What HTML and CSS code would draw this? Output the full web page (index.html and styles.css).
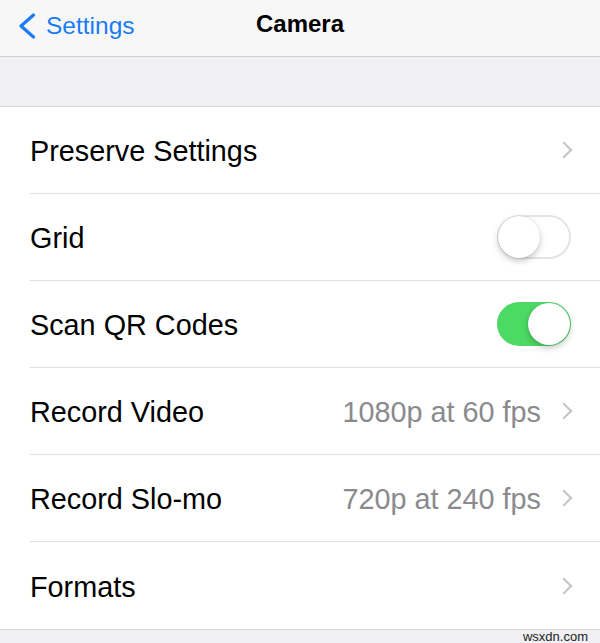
FILE: index.html
```html
<!DOCTYPE html>
<html lang="en">
<head>
  <meta charset="UTF-8">
  <meta name="viewport" content="width=device-width, initial-scale=1.0">
  <title>Camera</title>
  <link rel="stylesheet" href="styles.css">
</head>
<body>
  <!-- Navigation bar -->
  <header class="navbar">
    <a class="back" href="#">
      <svg class="back-icon" viewBox="0 0 18 26" width="18" height="26">
        <path d="M15.5 2 L3 13 L15.5 24" fill="none" stroke="currentColor" stroke-width="3.2" stroke-linecap="round" stroke-linejoin="round"/>
      </svg>
      <span>Settings</span>
    </a>
    <h1 class="nav-title">Camera</h1>
  </header>

  <div class="spacer"></div>

  <!-- Settings group -->
  <ul class="group">
    <li class="row">
      <span class="label">Preserve Settings</span>
      <span class="accessory"><span class="chevron"></span></span>
    </li>
    <li class="row">
      <span class="label">Grid</span>
      <span class="accessory"><span class="switch"></span></span>
    </li>
    <li class="row">
      <span class="label">Scan QR Codes</span>
      <span class="accessory"><span class="switch on"></span></span>
    </li>
    <li class="row">
      <span class="label">Record Video</span>
      <span class="accessory"><span class="value">1080p at 60 fps</span><span class="chevron"></span></span>
    </li>
    <li class="row">
      <span class="label">Record Slo-mo</span>
      <span class="accessory"><span class="value">720p at 240 fps</span><span class="chevron"></span></span>
    </li>
    <li class="row">
      <span class="label">Formats</span>
      <span class="accessory"><span class="chevron"></span></span>
    </li>
  </ul>

  <footer class="footer">wsxdn.com</footer>
</body>
</html>
```

FILE: styles.css
```css
/* --- Base --- */
* {box-sizing:border-box;margin:0;padding:0}
body{font-family:"Liberation Sans", Arial, sans-serif;background:#efeff4;color:#000;width:600px;overflow:hidden}

/* --- Nav bar --- */
.navbar{position:relative;height:57px;background:#f7f7f8;border-bottom:1px solid #cfcfd3;display:flex;align-items:center}
.back{display:flex;align-items:center;gap:10px;padding-left:18px;color:#1a7cf5;text-decoration:none;font-size:24.5px;margin-top:-5px}
.back-icon{display:block;margin-top:1px}
.nav-title{position:absolute;left:0;right:0;top:10px;text-align:center;font-size:24px;font-weight:700;pointer-events:none}

.spacer{height:50px;border-bottom:1px solid #d9d9dd}

/* --- Grouped list --- */
.group{list-style:none;background:#fff;border-bottom:1px solid #d9d9dd}
.row{display:flex;align-items:center;justify-content:space-between;height:87px;margin-left:30px;padding-right:29px;border-bottom:1px solid #e0e0e3}
.row:last-child{border-bottom:none}
.label{font-size:28.8px;margin-top:3px}
.accessory{display:flex;align-items:center;gap:17px}
.value{font-size:28.8px;color:#8a8a8f;margin-top:3px}
.chevron{width:12px;height:12px;border-top:2px solid #c4c4c9;border-right:2px solid #c4c4c9;transform:rotate(45deg);margin-right:1px}

/* --- Switch --- */
.switch{position:relative;display:block;width:74px;height:44px;border-radius:22px;border:2px solid #e4e4e6;background:#fff}
.switch::after{content:"";position:absolute;top:-1px;left:-1px;width:42px;height:42px;border-radius:50%;background:#fff;box-shadow:0 3px 6px rgba(0,0,0,.22),0 0 1px rgba(0,0,0,.2)}
.switch.on{background:#4cd964;border-color:#4cd964}
.switch.on::after{left:auto;right:-1px}

/* --- Footer --- */
.footer{text-align:right;padding-right:12px;font-size:13px;color:#222;height:15px;line-height:14px}
```
